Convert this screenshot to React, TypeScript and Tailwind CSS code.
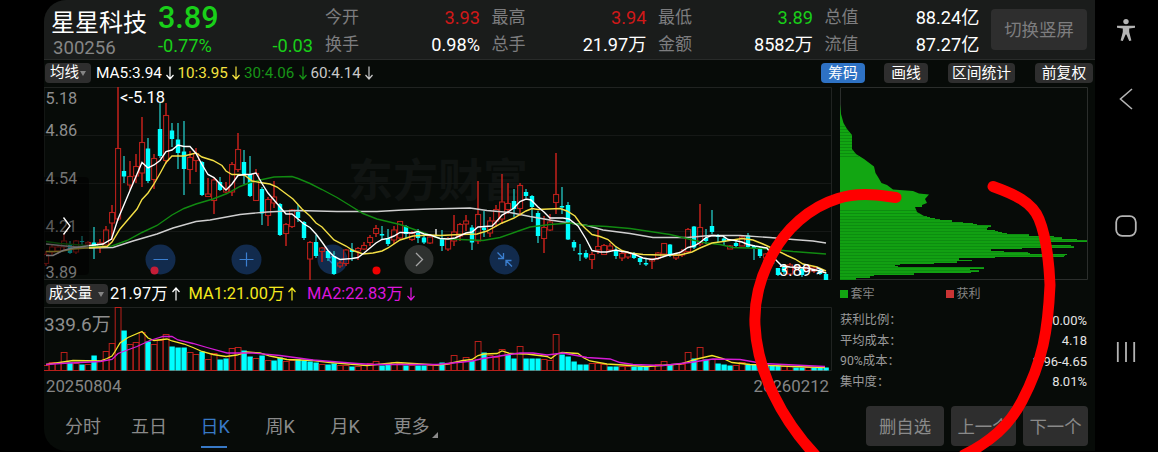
import React from 'react';

// [direction, high, low, body top, body bottom] on the price canvas
type Candle = [string, number, number, number, number];

const candles: Candle[] = [
  ['r', 167, 182, 170.5, 179.5], ['r', 160, 171, 163, 168], ['r', 162, 170, 163, 167], ['r', 150, 166, 157, 163],
  ['c', 157, 170, 161, 169], ['r', 156, 170, 157, 168], ['c', 152, 161, 157, 158], ['r', 157, 163, 158.5, 160],
  ['c', 143, 175, 158.5, 163.5], ['r', 155, 169, 159, 163], ['r', 142, 162, 146, 161], ['r', 121, 156, 128.5, 139],
  ['r', 3, 137, 64.5, 135], ['c', 72, 99, 87, 92.5], ['r', 77, 106, 92.5, 101], ['r', 70, 99, 82.5, 92],
  ['r', 33, 103, 58.5, 89], ['c', 54, 99, 64.5, 97], ['r', 70, 105, 74.5, 95.5], ['c', 19, 74, 45, 72],
  ['r', 19, 80, 31.5, 76.5], ['c', 39, 63, 46.5, 55], ['c', 39, 85, 55.5, 69], ['c', 37, 111, 67.5, 85],
  ['r', 67, 100, 73.5, 85.5], ['r', 64, 88, 69.5, 76.5], ['c', 77, 112, 78, 111], ['r', 94, 113, 110, 112.5],
  ['r', 94, 130, 96, 116.5], ['c', 93, 107, 98, 106], ['r', 98, 109, 105, 108], ['r', 78, 112, 80.5, 108],
  ['r', 49, 88, 65.5, 85.5], ['c', 66, 100, 78, 90], ['c', 72, 113, 90, 112], ['r', 85, 117, 89.5, 116.5],
  ['c', 103, 141, 105, 129.5], ['r', 113, 142, 115.5, 131.5], ['r', 97, 124, 113, 119], ['c', 119, 152, 120, 151],
  ['r', 139, 162, 140.5, 149.5], ['r', 125, 144, 126, 142.5], ['c', 121, 138, 128, 134], ['c', 137, 156, 138, 154],
  ['r', 157, 196, 158.5, 175], ['c', 151, 174, 158, 172], ['r', 163, 178, 164, 167.5], ['c', 166, 177, 167, 174],
  ['c', 167, 191, 172, 190], ['r', 177, 184, 179, 182], ['r', 165, 182, 166, 179.5], ['c', 159, 177, 165.5, 168],
  ['r', 163, 176, 164.5, 167], ['r', 158, 166, 161.5, 165], ['r', 151, 162, 153.5, 158.5], ['r', 141, 153, 144.5, 149.5],
  ['c', 142, 155, 150, 151.5], ['c', 145, 162, 154.5, 160], ['r', 142, 160, 146, 156], ['r', 137, 155, 137.5, 154],
  ['c', 141, 154, 142, 150], ['r', 147, 157, 149.5, 155.5], ['c', 145, 159, 149, 154], ['c', 152, 160, 153.5, 158.5],
  ['r', 152, 160, 153, 159], ['w', 145, 151, 150, 151], ['c', 146, 167, 154.5, 162], ['r', 153, 167, 155.5, 165],
  ['r', 131, 162, 148, 157], ['r', 139, 157, 140.5, 152], ['r', 131, 147, 137, 140], ['c', 141, 166, 143.5, 158.5],
  ['r', 97, 160, 130.5, 157], ['c', 127, 153, 143.5, 146], ['r', 133, 153, 137, 149], ['r', 121, 143, 125.5, 137],
  ['r', 90, 140, 118, 135], ['r', 99, 130, 119.5, 125.5], ['c', 105, 133, 117, 125], ['r', 99, 132, 101.5, 124.5],
  ['c', 105, 114, 108, 112], ['c', 111, 138, 112, 123], ['c', 127, 159, 129, 152], ['r', 132, 169, 143.5, 154.5],
  ['r', 130, 147, 138, 146], ['r', 69, 130, 110.5, 118.5], ['c', 103, 130, 122, 123.5], ['c', 118, 156, 121, 155.5],
  ['c', 156, 167, 158, 163.5], ['c', 160, 177, 169, 170.5], ['c', 166, 175, 169, 173.5], ['r', 168, 185, 170.5, 175.5],
  ['r', 146, 170, 162.5, 166], ['r', 160, 171, 161.5, 170.5], ['r', 159, 168, 162, 166], ['c', 163, 175, 166, 172],
  ['r', 167, 177, 169.5, 174], ['r', 168, 175, 169, 173], ['c', 168, 175, 170, 174], ['c', 172, 181, 174, 178],
  ['c', 175, 182, 179, 180.5], ['r', 174, 185, 175, 177], ['r', 168, 176, 169, 174], ['r', 159, 171, 159.5, 170],
  ['c', 160, 173, 160.5, 171], ['r', 170, 176, 171.5, 174], ['r', 165, 173, 168, 171], ['r', 144, 168, 145.5, 167.5],
  ['c', 142, 165, 142.5, 163.5], ['r', 120, 162, 143.5, 160], ['c', 145, 160, 154, 157], ['c', 126, 150, 142, 148],
  ['c', 150, 158, 151.5, 153], ['c', 153, 162, 154.5, 158], ['r', 161, 165, 162, 165], ['c', 157, 163, 159, 162],
  ['r', 151, 162, 153, 162], ['c', 149, 164, 151.5, 163], ['c', 161, 176, 162, 164], ['c', 163, 174, 165, 172],
  ['r', 169, 177, 170, 174], ['c', 170, 182, 175, 180], ['c', 184, 192, 184, 191], ['c', 181, 190, 183, 188],
  ['r', 179, 191, 181, 190], ['r', 181, 187, 183, 186], ['c', 184, 193, 185, 191], ['r', 181, 188, 183, 186],
  ['r', 182, 189, 184, 187], ['c', 184, 191, 186, 190], ['c', 188, 196, 190, 196],
];

const volumes =
  'r5 r8 r7 r18 c8 r7 c6 r6 c15 r9 r19 r27 r63 c40 r26 r28 r38 c29 r26 r30 r36 c24 c23 c23 r18 r16 c19 r11 r17 c11 c12 r22 r23 c20 c14 r12 c15 r10 c10 c13 r9 r10 c11 c10 c9 c8 r6 c6 c7 r5 r5 c4 r4 r5 r7 r9 c5 c6 r8 r7 c5 r5 c5 c5 r5 r5 c8 r6 r15 r8 r13 c10 r29 c18 r15 r13 r21 c16 c12 r24 c12 c12 c12 r11 r10 r36 c16 c14 c9 c6 c6 r7 r7 r6 c4 c4 r4 r4 c4 c4 c4 r5 r6 r9 c6 r6 r6 r18 c12 r23 c11 r11 c7 c6 c5 r5 r8 c6 c6 c6 c6 c5 c5 r4 r4 c3 c3 r3 c3 c3 c3'.split(' ');

const ma5 =
  '2,171.5 9,171.5 19,166.5 29,164 46,161.5 59,160 67.5,155 74,135 86,106.5 98,78.5 104,84 110,81 116,76.5 122,67.5 128,66 134,61 140,62.5 146,62.5 152,69.5 158,80.5 164,90.5 170,93.5 176,100 182,106 188,100 194,91.5 200,90.5 206,90.5 212,89 218,99.5 224,109 230,116 236,123 242,130 248,130 254,135 260,140 266,143.5 272,150 278,158 284,166.5 290,172.5 296,175.5 302,175 308,174.5 314,173.5 320,169 326,164 332,159 338,155.5 344,154.5 350,152 356,148.5 368,149 374,147.5 380,150 386,151 396,154.5 404,155 411,154 422,149 428,148 434,143 448,142 452,138 458,131 464,128 470,124 476,117.5 482,115 487,116 494,123 500,128 506,134 519,134 525,135 534,142 542,155 548,166.5 556,168 563,168 572,166 578,167.5 583,168 591,170.5 599,174 608,175.5 614,174.5 623,171.5 636,168.5 644,163.5 650,162 656,158.5 662,153.5 668,151.5 679,152 684,155.5 691,156.5 698,158 704,160.5 711,162 723,164 729,173 738,182 746,183 763,184 776,187 782,189';
const ma10 =
  '2,167.5 16,167.5 29,165 49,163.5 63,162.5 68,158 76,145 93,125 98,115.5 104,109 110,100 116,89.5 122,78.5 128,72 140,72 152,69 158,73 169,76.5 178,81.5 182,87 188,90.5 196,90.5 201,91.5 208,97 216,98.5 226,100 233,103 241,109 249,115 258,125 266,132 272,139 278,143 290,156 302,162 309,166.5 319,170 329,169 338,167 344,164 356,156 369,152 386,151 396,151.5 416,150.5 433,150 443,147 458,139 470,134 482,127 488,124.5 494,125.5 516,124.5 523,127 531,132 536,139 542,145 548,150.5 556,152.5 564,155.5 571,162 578,166.5 586,169 599,170.5 616,171 636,171 648,168 656,164 668,159 679,157.5 698,154.5 709,156 719,160 733,166.5 743,171.5 751,175 759,180 773,183 782,187';
const ma30 =
  '2,157.5 16,159.5 36,161 53,162.5 68,162 83,156.5 98,148.5 113,141.5 128,131 140,124.5 152,120 169,115 183,109.5 196,102.5 206,98.5 216,96 230,93 248,92.5 254,94.5 266,99.5 278,105.5 293,113.5 306,121.5 319,129.5 333,135 356,140.5 369,145 386,151 396,154.5 416,155.5 439,156.5 456,153.5 473,147.5 486,143 506,140.5 526,139 543,141.5 563,142.5 586,144.5 596,146 626,150.5 643,154.5 659,158.5 676,160.5 689,163.5 719,164.5 749,167.5 782,170';
const ma60 =
  '2,160 26,162.5 46,164 69,163.5 89,157 113,150 129,144 152,137.5 166,136 196,130.5 206,129.5 223,128 253,126.5 293,127.5 333,127.5 359,126 386,125 426,124 443,126.5 466,128.5 486,132.5 506,136 526,139 543,141.5 559,146 586,149.5 609,153.5 643,153.5 666,151.5 696,151.5 726,153.5 749,155.5 769,157 782,159';
const volMa1 =
  '2,57.5 29,53.5 56,54 63,51.5 68,49 71,44.5 76,36 84,30.5 98,24.5 104,31 110,33.5 123,32 128,34 140,37 149,40.5 158,44.5 169,47.5 182,49.5 193,48 203,45 216,46 226,49 243,52.5 269,53.5 286,55.5 323,58.5 353,55.5 393,58 403,57 419,53.5 428,52.5 434,48.5 440,47 453,46.5 458,44 466,46.5 483,47 503,49.5 507,51.5 513,47 518,45.5 534,46.5 540,51 546,54 563,57 603,59.5 636,57 653,52 668,48.5 679,51.5 688,55.5 706,57.5 749,59.5 781,60.5';
const volMa2 =
  '2,57.5 16,56.5 56,54.5 68,52.5 74,46.5 93,39.5 106,33.5 119,29.5 128,29.5 134,33 149,36.5 163,40.5 183,46 209,46 236,48.5 269,53 313,56.5 330,57.5 393,57.5 419,55 428,54 439,51.5 459,48.5 476,46 489,46 503,48 519,46 543,50.5 566,52 576,55.5 589,57.5 619,58.5 646,55.5 669,52 696,52.5 719,56.5 781,59.5';

// width of every one pixel row in the lower part of the chip distribution
const chipTop = 132;
const chipRows = [
  87, 90, 95, 100, 112, 112, 123, 133, 137, 151, 151, 148, 147, 147, 155, 158, 162, 167, 189, 189, 214, 222, 222, 237, 247, 247, 207, 205, 208, 231, 234, 234,
  182, 151, 151, 164, 188, 190, 227, 225, 224, 155, 119, 119, 132, 117, 117, 94, 60, 55, 58, 144, 144, 130, 139, 139, 131, 74, 74, 34, 30, 30, 16, 16,
];

const quotes = [
  [['今开', '3.93', 'text-[#d01818]'], ['换手', '0.98%', 'text-white']],
  [['最高', '3.94', 'text-[#d01818]'], ['总手', '21.97万', 'text-white']],
  [['最低', '3.89', 'text-[#19cf19]'], ['金额', '8582万', 'text-white']],
  [['总值', '88.24亿', 'text-white'], ['流值', '87.27亿', 'text-white']],
];

const stats = [
  ['获利比例：', '0.00%'],
  ['平均成本：', '4.18'],
  ['90%成本：', '3.96-4.65'],
  ['集中度：', '8.01%'],
];

const Arrow: React.FC<{ up?: boolean }> = ({ up }) => (
  <svg className={up ? 'w-4 h-4 shrink-0 rotate-180' : 'w-4 h-4 shrink-0'} viewBox="0 0 16 16" fill="none" stroke="currentColor" strokeWidth="1.2">
    <path d="M8 1.5V14M4.5 10L8 14L11.5 10" />
  </svg>
);

const Header: React.FC = () => (
  <header className="h-15 flex bg-[#1a1c1b] border-b border-[#292b2a] pl-[7px]">
    <div className="w-[107px] pt-[9px] whitespace-nowrap">
      <p className="text-[24px] leading-[29px] text-white">星星科技</p>
      <p className="text-[18.6px] leading-5 pl-0.5 text-[#858585]">300256</p>
    </div>
    <div className="w-[155px] text-[#19cf19]">
      <p className="text-[30.5px] leading-[36px] font-medium">3.89</p>
      <div className="flex justify-between text-[18.2px] leading-5">
        <span>-0.77%</span>
        <span>-0.03</span>
      </div>
    </div>
    <div className="flex gap-[11.5px] ml-3">
      {quotes.map((col, i) => (
        <div key={i} className="w-[155px] pt-1 flex flex-col">
          {col.map(([label, value, color]) => (
            <div key={label} className="h-[27px] flex items-center justify-between">
              <span className="text-[17px] text-[#7d7d7f]">{label}</span>
              <span className={`text-[18.2px] ${color}`}>{value}</span>
            </div>
          ))}
        </div>
      ))}
    </div>
    <button className="w-24 h-[41px] ml-[11.5px] mt-[9px] pt-0.5 rounded bg-[#2e2e2e] text-[17.4px] text-[#7d7d7f]">切换竖屏</button>
  </header>
);

const Toolbar: React.FC = () => (
  <div className="h-6 flex items-center pt-0.5 pl-px pr-0.5 text-[15.2px] leading-5 whitespace-nowrap">
    <button className="w-[46px] h-5 flex items-center justify-center rounded-sm bg-[#2e2e2e] text-[14.5px] text-white">
      均线<span className="border-x-[3px] border-x-transparent border-t-[5px] border-t-[#858585] ml-px" />
    </button>
    <div className="flex items-center ml-[5px] text-white"><span className="w-[65.5px] text-[15.4px]">MA5:3.94</span><Arrow /></div>
    <div className="flex items-center text-[#f5e33f]"><span className="w-[50.5px]">10:3.95</span><Arrow /></div>
    <div className="flex items-center text-[#179417]"><span className="w-[50.5px]">30:4.06</span><Arrow /></div>
    <div className="flex items-center text-[#c9c9c9]"><span className="w-[50.5px]">60:4.14</span><Arrow /></div>
    <div className="flex ml-auto text-[14.8px] text-white">
      <button className="w-11 h-5 rounded-sm bg-[#2e72c4]">筹码</button>
      <button className="w-11 h-5 rounded-sm bg-[#2e2e2e] ml-[19px]">画线</button>
      <button className="w-[67px] h-5 rounded-sm bg-[#2e2e2e] ml-5">区间统计</button>
      <button className="w-[58px] h-5 rounded-sm bg-[#2e2e2e] ml-5">前复权</button>
    </div>
  </div>
);

const PriceChart: React.FC = () => (
  <div className="relative h-[197px] text-[16.3px] leading-5 text-[#8e8e8e]">
    <svg className="block" width="788" height="197" viewBox="0 0 788 197" fill="none">
      <text x="304" y="113" fontSize="45" fontWeight="700" fill="#101412">东方财富</text>
      <path d="M0 51.5H787M0 99.5H787M0 147.5H787" stroke="#151816" />
      <path d="M0 3.5H787.5V195.5H0Z" stroke="#202321" />
      <g fill="#122b4d">
        <circle cx="116.5" cy="175.5" r="15" />
        <circle cx="202.5" cy="175.5" r="15" />
        <circle cx="288.5" cy="175.5" r="15" />
        <circle cx="460.5" cy="175.5" r="15" />
      </g>
      <path d="M291 169L284.5 175.5L291 182" stroke="#2f6fbd" strokeWidth="1.3" />
      {candles.map(([dir, high, low, top, bottom], i) => {
        const x = 2 + i * 6;
        if (dir === 'r') {
          return (
            <g key={i} stroke="#b9201b">
              <path d={`M${x} ${high}V${top}M${x} ${bottom}V${low}`} strokeWidth="1.6" />
              <rect x={x - 2.4} y={top} width="5" height={bottom - top} strokeWidth="1.1" />
            </g>
          );
        }
        return (
          <g key={i}>
            <path d={`M${x} ${high}V${low}`} stroke={dir === 'w' ? '#d0d0d0' : '#1fa5a3'} strokeWidth="1.6" />
            {dir === 'c' && <rect x={x - 2.2} y={top} width="4.4" height={bottom - top} fill="#00ffff" />}
          </g>
        );
      })}
      <polyline points={ma60} stroke="#cfcfcf" strokeWidth="1.4" />
      <polyline points={ma30} stroke="#118a11" strokeWidth="1.4" />
      <polyline points={ma10} stroke="#f3df45" strokeWidth="1.4" />
      <polyline points={ma5} stroke="#ffffff" strokeWidth="1.4" />
      <circle cx="375" cy="175.5" r="14.5" fill="#333534" fillOpacity=".9" />
      <path d="M372 169L378.5 175.5L372 182" stroke="#a5a5a5" strokeWidth="1.3" />
      <path d="M109.5 175.5H124M195.5 175.5H209.5M202.5 168.5V182.5" stroke="#3b7fd0" strokeWidth="1.2" />
      <path d="M453.5 168.5L459.5 174.5M454 174.5H459.5V169M468 182.5L462 176.5M467.5 176.5H462V182" stroke="#3b7fd0" strokeWidth="1.3" />
      <circle cx="110.5" cy="186.5" r="4" fill="#c51d37" />
      <circle cx="332.5" cy="186.5" r="4" fill="#f00000" />
    </svg>
    <div className="absolute left-0 top-[93px] w-[45px] h-[98px] rounded-r bg-black/55" />
    <span className="absolute left-[1.5px] top-[5px]">5.18</span>
    <span className="absolute left-[1.5px] top-[37px]">4.86</span>
    <span className="absolute left-[1.5px] top-[85px] text-[#747474]">4.54</span>
    <span className="absolute left-[1.5px] top-[133px] text-[#5a5a5a]">4.21</span>
    <span className="absolute left-[1.5px] top-[179px] text-[#747474]">3.89</span>
    <span className="absolute left-[76px] top-1 text-[16.5px] text-white">&lt;-5.18</span>
    <span className="absolute left-[735px] top-[177px] text-[16.5px] text-white">3.89-&gt;</span>
    <svg className="absolute left-[18px] top-[133px]" width="10" height="18" viewBox="0 0 10 18" fill="none" stroke="#fff" strokeWidth="1.3">
      <path d="M1.5 0.5L8 9L1.5 17.5" />
    </svg>
  </div>
);

const VolumeChart: React.FC = () => (
  <div>
    <div className="h-[26px] flex items-center pl-[1.5px] text-[16.4px] text-white whitespace-nowrap">
      <button className="w-[62px] h-5 flex items-center justify-center rounded-sm bg-[#2e2e2e] text-[14.5px]">
        成交量<span className="border-x-[3px] border-x-transparent border-t-[5px] border-t-[#858585] ml-1.5" />
      </button>
      <div className="w-[78.5px] flex items-center ml-[2.5px]">21.97万<Arrow up /></div>
      <div className="w-[118.5px] flex items-center text-[#f5ea1e]">MA1:21.00万<Arrow up /></div>
      <div className="flex items-center text-[#dd16dd]">MA2:22.83万<Arrow /></div>
    </div>
    <div className="relative h-16">
      <svg className="block" width="788" height="64" viewBox="0 0 788 64" fill="none">
        <path d="M0 0.5H787.5V63.5H0Z" stroke="#202321" />
        <path d="M0 63.5H783" stroke="#8c2a25" />
        {volumes.map((bar, i) => {
          const h = Number(bar.slice(1));
          const x = 2 + i * 6;
          return bar[0] === 'r' ? (
            <rect key={i} x={x - 2.8} y={63.5 - h} width="5.8" height={h} stroke="#b9201b" />
          ) : (
            <rect key={i} x={x - 2.6} y={63.5 - h} width="5.4" height={h} fill="#00ffff" />
          );
        })}
        <polyline points={volMa1} stroke="#f3e52a" strokeWidth="1.3" />
        <polyline points={volMa2} stroke="#d51bd5" strokeWidth="1.3" />
      </svg>
      <span className="absolute left-0 top-1.5 text-[19px] leading-6 text-[#8e8e8e]">339.6万</span>
    </div>
    <div className="flex justify-between pl-0.5 pr-[3px] pt-[5px] text-[16.8px] leading-5 text-[#858585]">
      <span>20250804</span>
      <span>20260212</span>
    </div>
  </div>
);

const ChipPanel: React.FC = () => (
  <div className="w-[247px] ml-2 shrink-0">
    <svg className="block" width="248" height="197" viewBox="0 0 248 197" fill="none">
      <path d="M0.5 3.5H247.5V195.5H0.5Z" stroke="#2b2e2c" />
      <path d="M0 20L1 30L3.5 39L7 45L12 51V65L16 70L24 75L34 82.5L35.5 89L38 93L41.5 99L47 101L53 105.5L73 107L79 109.5L89 110.5L85 115L87 119L82 121V123H75L77 128L84 132H0Z" fill="#12a612" />
      {chipRows.map((w, i) => (
        <rect key={i} x="0" y={chipTop + i} width={w} height="1" fill={i % 3 === 0 ? '#0d8d10' : '#12a012'} />
      ))}
      <g stroke="#0d8d10">
        <path d="M0 42.5H5M0 45.5H7M0 48.5H9M0 51.5H12M0 54.5H12M0 57.5H12M0 60.5H12M0 63.5H12M0 66.5H13M0 69.5H15M0 72.5H19" />
        <path d="M0 126.5H76M0 129.5H79" />
      </g>
    </svg>
    <div className="flex pt-[5px] text-[12px] leading-4 text-[#858585]">
      <p className="w-[106px] flex items-center gap-[3px]"><span className="size-[7.5px] bg-[#12a612]" />套牢</p>
      <p className="flex items-center gap-[3px]"><span className="size-[7.5px] bg-[#c93434]" />获利</p>
    </div>
    <div className="pt-2">
      {stats.map(([label, value]) => (
        <div key={label} className="h-[20.6px] flex items-center justify-between">
          <span className="text-[12.3px] text-[#9a9a9a]">{label}</span>
          <span className="text-[13px] text-[#e4e4e4]">{value}</span>
        </div>
      ))}
    </div>
  </div>
);

const Footer: React.FC = () => (
  <footer className="h-[51px] flex pl-[21px] pr-[7px] text-[18px] text-[#8a8a8a] whitespace-nowrap">
    <nav className="flex pt-[13px] leading-[28px]">
      <span className="w-[66px]">分时</span>
      <span className="w-[69.5px]">五日</span>
      <span className="w-[65px] text-[#3879c6]">
        <span className="block w-[27px]">日K</span>
        <span className="block w-[26.5px] h-0.5 mt-[5px] bg-[#3879c6]" />
      </span>
      <span className="w-[65px]">周K</span>
      <span className="w-[63px]">月K</span>
      <span className="flex">
        更多
        <span className="mt-[19px] ml-0.5 h-0 border-l-[6px] border-l-transparent border-b-[6px] border-b-[#8a8a8a]" />
      </span>
    </nav>
    <div className="flex gap-[7px] ml-auto pt-[6px] text-[17.4px]">
      <button className="w-[78px] h-[39.5px] pt-0.5 rounded bg-[#2e2e2e]">删自选</button>
      <button className="w-[65px] h-[39.5px] pt-0.5 rounded bg-[#2e2e2e]">上一个</button>
      <button className="w-[65px] h-[39.5px] pt-0.5 rounded bg-[#2e2e2e]">下一个</button>
    </div>
  </footer>
);

const SystemBar: React.FC = () => (
  <aside className="w-[63px] flex flex-col items-center pr-px text-[#b4b4b4]">
    <svg className="mt-[18px]" width="20" height="24" viewBox="0 0 20 24" fill="currentColor">
      <circle cx="10" cy="3.6" r="2.7" />
      <path d="M1 7.8H19V9.8L13.2 10.6V14L15.4 22.4L13.2 23L10.4 16.4H9.6L6.8 23L4.6 22.4L6.8 14V10.6L1 9.8Z" />
    </svg>
    <svg className="mt-[46px]" width="14" height="22" viewBox="0 0 14 22" fill="none" stroke="currentColor" strokeWidth="1.6">
      <path d="M13 1L1.5 11L13 21" />
    </svg>
    <svg className="mt-[105px]" width="22" height="22" viewBox="0 0 22 22" fill="none" stroke="currentColor" strokeWidth="1.8">
      <rect x="1.2" y="1.2" width="19.6" height="19.6" rx="6" />
    </svg>
    <svg className="mt-[105px]" width="20" height="20" viewBox="0 0 20 20" stroke="currentColor" strokeWidth="1.8">
      <path d="M1.8 0V20M10 0V20M18.2 0V20" />
    </svg>
  </aside>
);

const App: React.FC = () => {
  return (
    <div className="relative w-[1158px] h-[452px] flex pl-11 overflow-hidden bg-black font-[Roboto,'Noto_Sans_CJK_SC',sans-serif]">
      <main className="w-[1051px] h-[451px] rounded-l-[22px] overflow-hidden bg-[#070b08]">
        <Header />
        <Toolbar />
        <div className="h-[316px] flex">
          <div className="w-[788px] shrink-0">
            <PriceChart />
            <VolumeChart />
          </div>
          <ChipPanel />
        </div>
        <Footer />
      </main>
      <SystemBar />
      <svg className="absolute inset-0" width="1158" height="452" viewBox="0 0 1158 452" fill="none" stroke="#ff0000" strokeWidth="11" strokeLinecap="round">
        <path d="M896 197.5C880 195.500 860 191.500 838 198.500C810 207 785 229 771 257C759 280 754 303 755 325C757 371 781 419 817 457" />
        <path d="M993 186.500C1014 194 1032 202 1039 219C1046 236 1049 262 1050 285C1048 330 1043 361 1022 401C1009 426 990 442 964 455" />
      </svg>
    </div>
  );
};

export default App;
